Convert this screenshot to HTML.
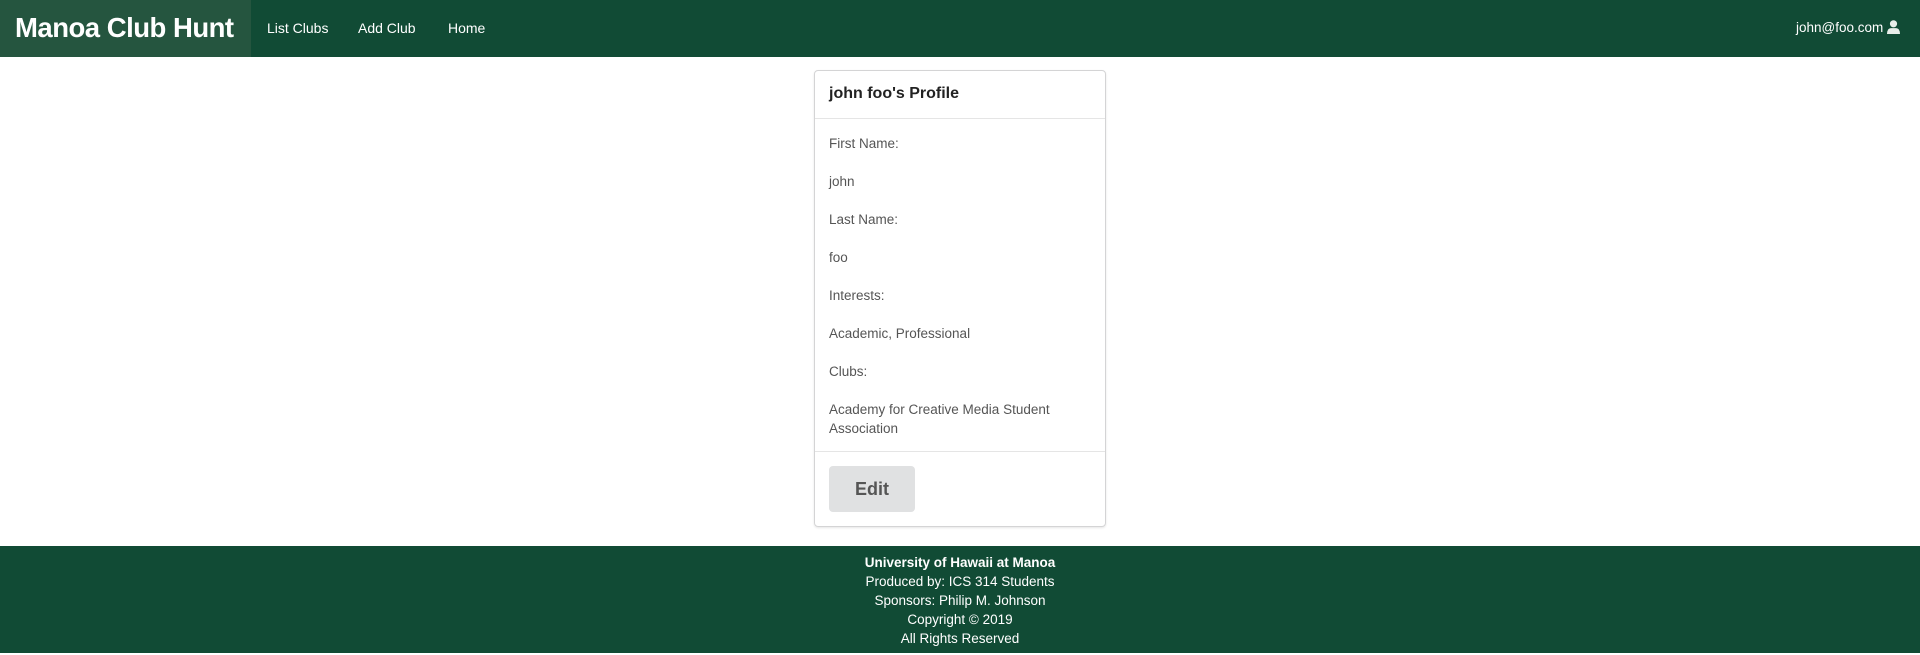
<!DOCTYPE html>
<html><head><meta charset="utf-8"><style>
*{box-sizing:border-box;margin:0;padding:0}
body{width:1920px;height:655px;background:#fff;font-family:"Liberation Sans",sans-serif;position:relative;overflow:hidden}
.nav{position:absolute;left:0;top:0;width:1920px;height:57px;background:#114b35}
.brand{position:absolute;left:0;top:0;width:251px;height:57px;background:#25553f;color:#fff;font-weight:bold;font-size:27.5px;line-height:56px;padding-left:15px;letter-spacing:-0.5px}
.nl{position:absolute;top:0;line-height:56px;color:#fff;font-size:14px}
.card{position:absolute;left:814px;top:70px;width:292px;height:457px;border:1px solid #d4d4d5;border-radius:4px;box-shadow:0 1px 2px rgba(0,0,0,.1)}
.hd{height:48px;border-bottom:1px solid #e5e5e5;padding-left:14px;font-size:16px;font-weight:bold;color:#222;line-height:46px}
.row{position:absolute;left:14px;font-size:13.5px;color:#555;line-height:19px}
.ft{position:absolute;left:0;width:290px;border-top:1px solid #e5e5e5}
.btn{position:absolute;left:14px;top:395px;width:86px;height:46px;background:#e0e1e2;border-radius:4px;color:#555;font-weight:bold;font-size:18px;text-align:center;line-height:46px}
.foot{position:absolute;left:0;top:546px;width:1920px;height:107px;background:#114b35;color:#fff;text-align:center;font-size:13.5px;line-height:19px;padding-top:7px}
</style></head><body>
<div class="nav">
<div class="brand">Manoa Club Hunt</div>
<div class="nl" style="left:267px">List Clubs</div>
<div class="nl" style="left:358px">Add Club</div>
<div class="nl" style="left:448px">Home</div>
<div class="nl" style="left:1796px;font-size:13.5px">john@foo.com</div>
<svg style="position:absolute;left:1887px;top:20px" width="13" height="14" viewBox="0 0 13 14"><circle cx="6.5" cy="3.8" r="3.6" fill="#e8eee9"/><path d="M0 14 Q0 8.3 3.8 8.1 L9.2 8.1 Q13 8.3 13 14Z" fill="#e8eee9"/></svg>
</div>
<div class="card">
<div class="hd">john foo's Profile</div>
<div class="row" style="top:63px">First Name:</div>
<div class="row" style="top:101px">john</div>
<div class="row" style="top:139px">Last Name:</div>
<div class="row" style="top:177px">foo</div>
<div class="row" style="top:215px">Interests:</div>
<div class="row" style="top:253px">Academic, Professional</div>
<div class="row" style="top:291px">Clubs:</div>
<div class="row" style="top:329px;width:240px">Academy for Creative Media Student Association</div>
<div class="ft" style="top:380px"></div>
<div class="btn">Edit</div>
</div>
<div class="foot"><b>University of Hawaii at Manoa</b><br>Produced by: ICS 314 Students<br>Sponsors: Philip M. Johnson<br>Copyright © 2019<br>All Rights Reserved</div>
</body></html>
